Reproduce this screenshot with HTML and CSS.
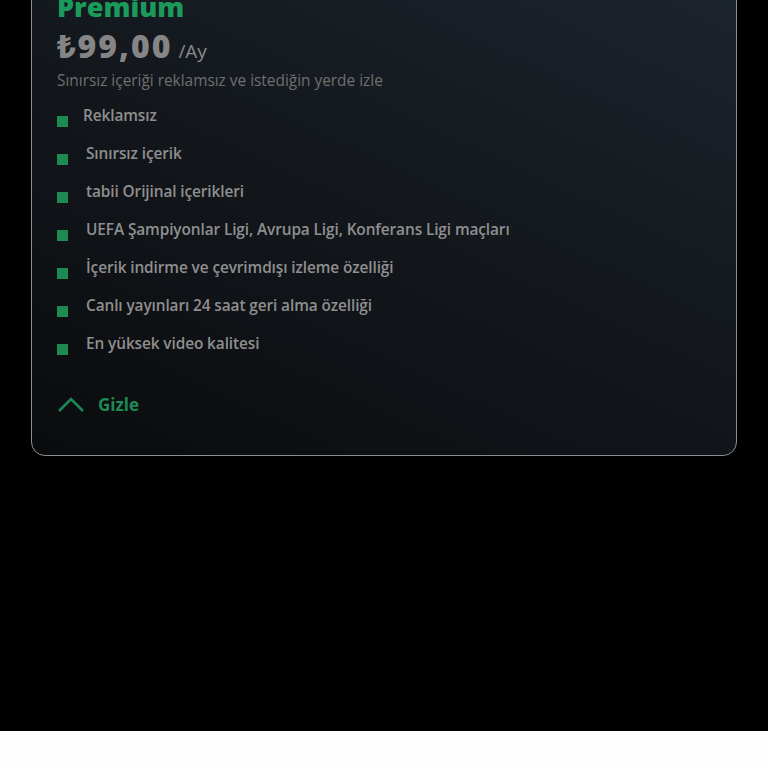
FILE: index.html
```html
<!DOCTYPE html>
<html lang="tr">
<head>
<meta charset="utf-8">
<link rel="stylesheet" href="styles.css">
</head>
<body>
<div class="screen">
  <section class="card">
    <h2 class="title">Premium</h2>
    <div class="price">
      <span class="amount">₺99,00</span>
      <span class="period">/Ay</span>
    </div>
    <p class="desc">Sınırsız içeriği reklamsız ve istediğin yerde izle</p>
    <ul class="features">
      <li class="feature first"><span class="dot"></span><span class="ftext">Reklamsız</span></li>
      <li class="feature"><span class="dot"></span><span class="ftext">Sınırsız içerik</span></li>
      <li class="feature"><span class="dot"></span><span class="ftext">tabii Orijinal içerikleri</span></li>
      <li class="feature"><span class="dot"></span><span class="ftext">UEFA Şampiyonlar Ligi, Avrupa Ligi, Konferans Ligi maçları</span></li>
      <li class="feature"><span class="dot"></span><span class="ftext">İçerik indirme ve çevrimdışı izleme özelliği</span></li>
      <li class="feature"><span class="dot"></span><span class="ftext">Canlı yayınları 24 saat geri alma özelliği</span></li>
      <li class="feature"><span class="dot"></span><span class="ftext">En yüksek video kalitesi</span></li>
    </ul>
    <button class="toggle">
      <svg class="chev" width="28" height="18" viewBox="0 0 28 18"><path d="M2 16 L14 4 L26 16" fill="none" stroke="#1c8a55" stroke-width="2.6"/></svg>
      <span>Gizle</span>
    </button>
  </section>
</div>
</body>
</html>
```
FILE: styles.css
```css
* { box-sizing: border-box; }
html, body { margin: 0; padding: 0; background: #fefefe; }
body { font-family: "Open Sans", "Noto Sans", sans-serif; }
.screen {
  height: 731px;
  background: #000;
  overflow: hidden;
  padding: 0 31px;
}
.card {
  margin-top: -24px;
  border: 1.5px solid #8b8e91;
  border-radius: 14px;
  background: linear-gradient(205deg, #1c242c 0%, #12161b 55%, #0a0b0d 100%);
  padding: 12px 24px 39px 25px;
}
.title {
  margin: 0;
  font-size: 27px;
  font-weight: 800;
  color: #1b9a5c;
  line-height: 36px;
}
.price {
  display: flex;
  align-items: baseline;
  gap: 6px;
  margin-top: -1px;
  height: 38px;
}
.amount {
  font-size: 32px;
  font-weight: 800;
  color: #858585;
  letter-spacing: 2px;
}
.period {
  font-size: 19px;
  color: #8a8a8a;
}
.desc {
  margin: 8px 0 0;
  font-size: 15.4px;
  color: #6f6f6f;
  line-height: 22px;
}
.features {
  list-style: none;
  margin: 13px 0 0;
  padding: 0;
  display: flex;
  flex-direction: column;
  gap: 16px;
}
.feature {
  display: flex;
  align-items: flex-start;
  height: 22px;
}
.dot {
  width: 11px;
  height: 11px;
  background: #1d8a52;
  margin-top: 11px;
  flex: none;
}
.ftext {
  margin-left: 18px;
  font-size: 15.4px;
  font-weight: 600;
  color: #8f8f8f;
  line-height: 22px;
  letter-spacing: -0.1px;
}
.feature.first .ftext { margin-left: 15px; }
.toggle {
  margin-top: 38px;
  display: flex;
  align-items: center;
  gap: 13px;
  background: none;
  border: 0;
  padding: 0;
  font-family: inherit;
  font-size: 17px;
  font-weight: 700;
  color: #1c8a55;
}
.chev { display: block; margin-top: -2px; }
```
